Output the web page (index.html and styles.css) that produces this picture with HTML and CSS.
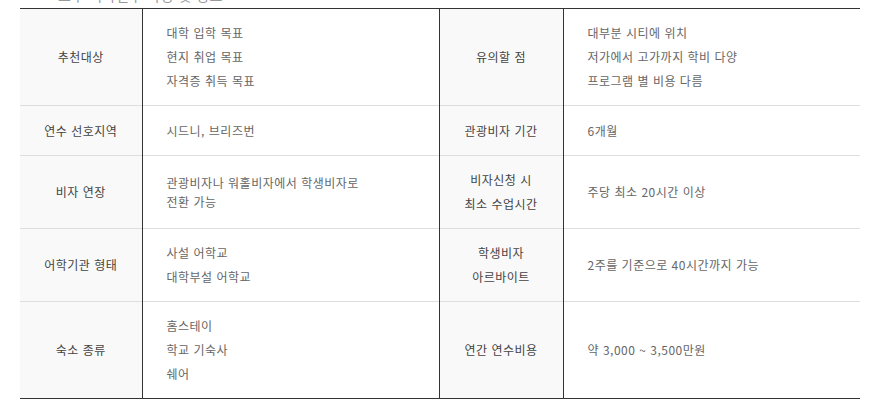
FILE: index.html
```html
<!DOCTYPE html>
<html lang="ko">
<head>
<meta charset="utf-8">
<link rel="stylesheet" href="styles.css">
</head>
<body>
<div class="caption">호주 어학연수 특징 및 정보</div>
<table class="info">
  <colgroup>
    <col class="c-label1"><col class="c-val"><col class="c-label2"><col class="c-val">
  </colgroup>
  <tr>
    <th class="first">추천대상</th>
    <td><div>대학 입학 목표</div><div>현지 취업 목표</div><div>자격증 취득 목표</div></td>
    <th>유의할 점</th>
    <td><div>대부분 시티에 위치</div><div>저가에서 고가까지 학비 다양</div><div>프로그램 별 비용 다름</div></td>
  </tr>
  <tr>
    <th class="first">연수 선호지역</th>
    <td>시드니, 브리즈번</td>
    <th>관광비자 기간</th>
    <td>6개월</td>
  </tr>
  <tr>
    <th class="first">비자 연장</th>
    <td class="wrap">관광비자나 워홀비자에서 학생비자로<br>전환 가능</td>
    <th>비자신청 시<br>최소 수업시간</th>
    <td>주당 최소 20시간 이상</td>
  </tr>
  <tr>
    <th class="first">어학기관 형태</th>
    <td><div>사설 어학교</div><div>대학부설 어학교</div></td>
    <th>학생비자<br>아르바이트</th>
    <td>2주를 기준으로 40시간까지 가능</td>
  </tr>
  <tr class="last">
    <th class="first">숙소 종류</th>
    <td><div>홈스테이</div><div>학교 기숙사</div><div>쉐어</div></td>
    <th>연간 연수비용</th>
    <td>약 3,000 ~ 3,500만원</td>
  </tr>
</table>
</body>
</html>
```
FILE: styles.css
```css
html, body {
  margin: 0;
  padding: 0;
  background: #fff;
}
body {
  font-family: "Noto Sans CJK KR", "Noto Sans", sans-serif;
  font-size: 12px;
  letter-spacing: 0.5px;
  color: #666;
}
.caption {
  margin: -12px 0 6px 58px;
  font-size: 14px;
  line-height: 14px;
  color: #999;
  white-space: nowrap;
}
.info {
  margin-left: 20px;
  width: 840px;
  table-layout: fixed;
  border-collapse: collapse;
  border-top: 1px solid #333;
  border-bottom: 1px solid #333;
}
.c-label1 { width: 122px; }
.c-label2 { width: 124px; }
.c-val { width: 297px; }
.info th,
.info td {
  padding: 12px 0;
  line-height: 24px;
  border-top: 1px solid #dedede;
  vertical-align: middle;
}
.info th {
  background: #f9f9f9;
  color: #444;
  font-weight: normal;
  text-align: center;
  border-left: 1px solid #333;
  border-right: 1px solid #333;
}
.info th.first {
  border-left: none;
}
.info td {
  text-align: left;
  padding-left: 24px;
}
.info td.wrap {
  line-height: 19px;
}
.info tr:first-child th,
.info tr:first-child td {
  border-top: 1px solid #333;
}
.info tr:nth-child(2) th,
.info tr:nth-child(2) td {
  padding-top: 13px;
}
```
